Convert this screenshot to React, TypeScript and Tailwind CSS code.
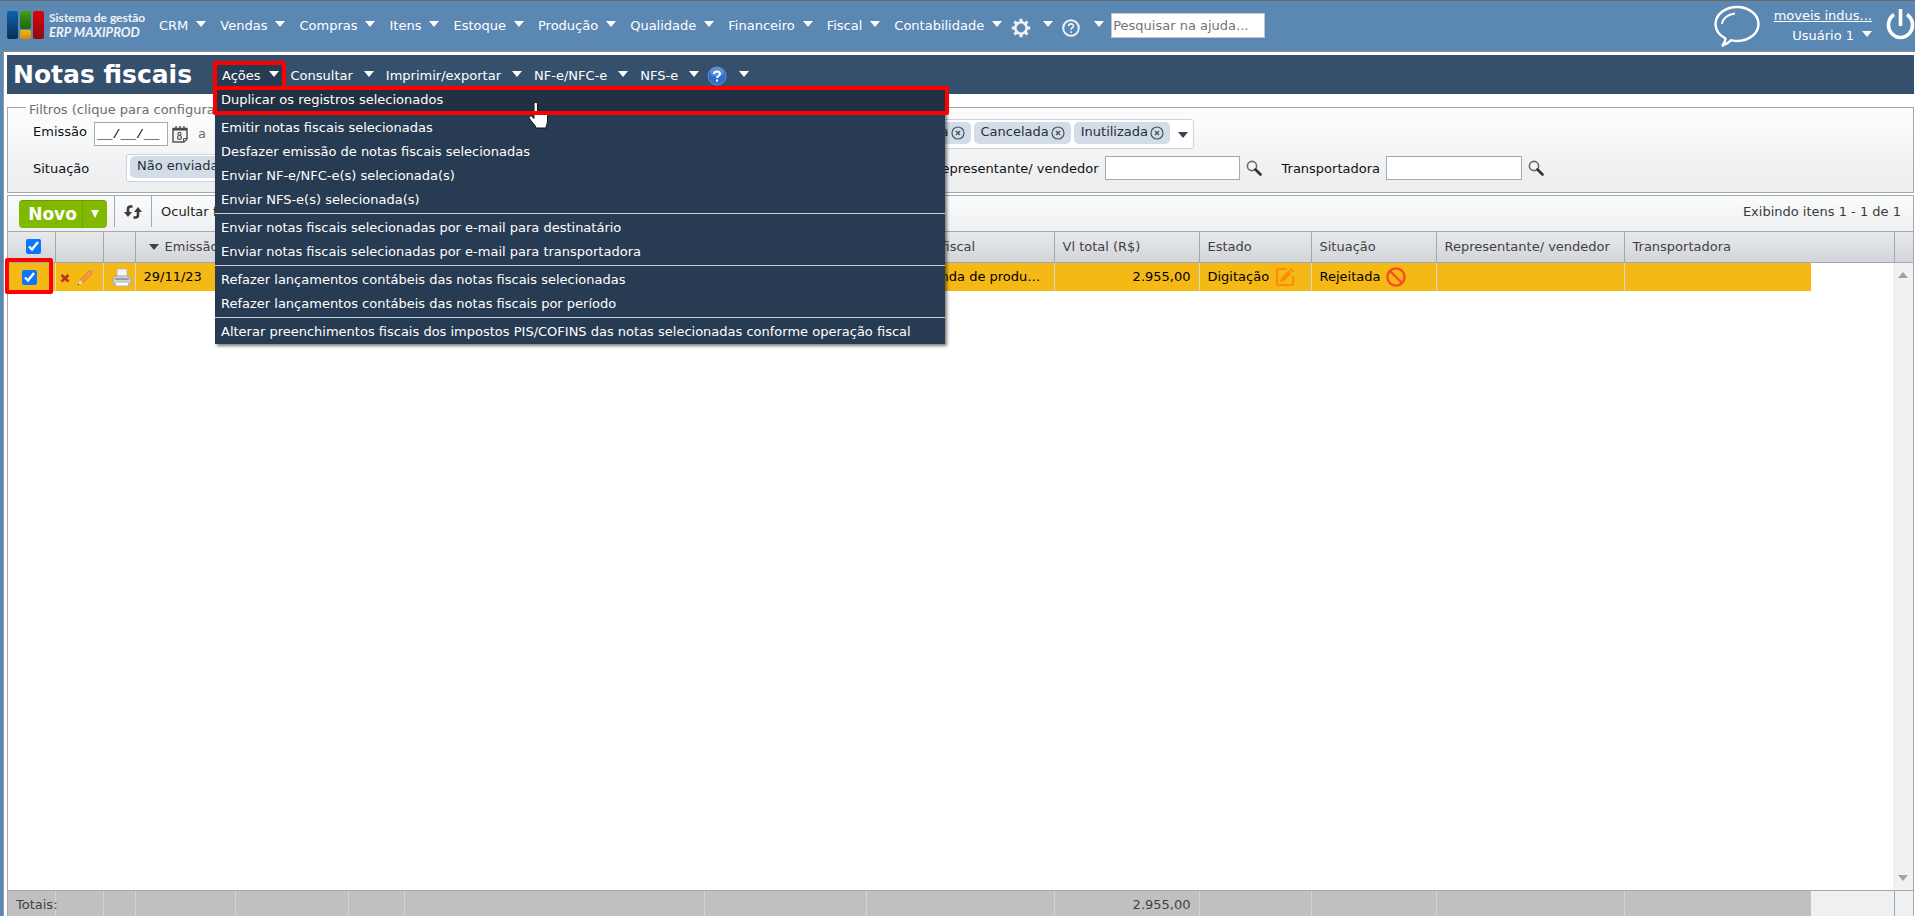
import React from 'react';

const TOP_MENU = ['CRM', 'Vendas', 'Compras', 'Itens', 'Estoque', 'Produção', 'Qualidade', 'Financeiro', 'Fiscal', 'Contabilidade'];

const ACTIONS = [
  ['Duplicar os registros selecionados'],
  [
    'Emitir notas fiscais selecionadas',
    'Desfazer emissão de notas fiscais selecionadas',
    'Enviar NF-e/NFC-e(s) selecionada(s)',
    'Enviar NFS-e(s) selecionada(s)',
  ],
  [
    'Enviar notas fiscais selecionadas por e-mail para destinatário',
    'Enviar notas fiscais selecionadas por e-mail para transportadora',
  ],
  [
    'Refazer lançamentos contábeis das notas fiscais selecionadas',
    'Refazer lançamentos contábeis das notas fiscais por período',
  ],
  ['Alterar preenchimentos fiscais dos impostos PIS/COFINS das notas selecionadas conforme operação fiscal'],
];

function Caret({ className = '' }: { className?: string }) {
  return (
    <svg className={`shrink-0 ${className}`} width="10" height="6" viewBox="0 0 10 6" fill="currentColor" aria-hidden="true">
      <path d="M0 0h10L5 6z" />
    </svg>
  );
}

function Logo() {
  return (
    <svg width="37" height="28" viewBox="0 0 37 28" className="shrink-0" aria-hidden="true">
      <defs>
        <linearGradient id="lb" x1="0" y1="0" x2="0" y2="1"><stop offset="0" stopColor="#0a63a8" /><stop offset="1" stopColor="#0a2f5c" /></linearGradient>
        <linearGradient id="lg" x1="0" y1="0" x2="0" y2="1"><stop offset="0" stopColor="#3fa01a" /><stop offset="1" stopColor="#1f6410" /></linearGradient>
        <linearGradient id="lr" x1="0" y1="0" x2="0" y2="1"><stop offset="0" stopColor="#dd0408" /><stop offset="1" stopColor="#8f0a10" /></linearGradient>
        <linearGradient id="ly" x1="0" y1="0" x2="0" y2="1"><stop offset="0" stopColor="#f5b512" /><stop offset="1" stopColor="#cf8d0a" /></linearGradient>
      </defs>
      <rect x="0" y="0" width="11" height="28" rx="2" fill="url(#lb)" />
      <rect x="13" y="0" width="11" height="18" rx="2" fill="url(#lg)" />
      <rect x="13" y="19" width="11" height="9" rx="2" fill="url(#ly)" />
      <rect x="26" y="0" width="11" height="28" rx="2" fill="url(#lr)" />
    </svg>
  );
}

function SearchIcon() {
  return (
    <svg width="16" height="16" viewBox="0 0 16 16" aria-hidden="true">
      <circle cx="6" cy="6" r="4.6" fill="#f6f7f8" stroke="#6b6b6b" strokeWidth="1.6" />
      <path d="M9.5 9.5l5 5" stroke="#333" strokeWidth="2.6" strokeLinecap="round" />
    </svg>
  );
}

function CalendarIcon() {
  return (
    <svg width="16" height="17" viewBox="0 0 16 17" aria-hidden="true" fill="none">
      <path d="M1 2.5h14V13l-3 3H1z" fill="#f4f5f6" stroke="#555" strokeWidth="1.5" />
      <path d="M1 3.5h14" stroke="#444" strokeWidth="2" />
      <path d="M4 0v2M8 0v2M12 0v2" stroke="#555" strokeWidth="1.4" />
      <path d="M11.5 16v-3.5h3.5" stroke="#555" />
      <circle cx="7.5" cy="7.9" r="1.5" stroke="#555" strokeWidth="1.2" />
      <circle cx="7.5" cy="11.4" r="1.9" stroke="#555" strokeWidth="1.2" />
    </svg>
  );
}

function CloseCircle() {
  return (
    <svg width="14" height="14" viewBox="0 0 14 14" fill="none" stroke="#4d545c" aria-hidden="true">
      <circle cx="7" cy="7" r="6" strokeWidth="1.2" />
      <path d="M5 5l4 4M9 5l-4 4" strokeWidth="1.4" />
    </svg>
  );
}

function Tag({ children }: { children: string }) {
  return (
    <li className="flex h-[22px] items-center gap-[2px] rounded-[5px] bg-[#d2dde9] pr-[6px] pl-[7px] whitespace-nowrap text-[#2b2f33]">
      <span className="pb-[2px] leading-[18px]">{children}</span>
      <button type="button" aria-label={`Remover ${children}`}><CloseCircle /></button>
    </li>
  );
}

const field = 'h-6 border border-[#a9a9a9] bg-white px-[2px] text-black outline-none';
const dateField = `${field} w-[74px] font-['Liberation_Mono',monospace]`;
const topButton = 'flex items-center gap-2 pr-[14px] whitespace-nowrap last-of-type:pr-[9px]';

function Header() {
  return (
    <header className="flex h-[52px] shrink-0 border-t border-b border-t-[#6a6a6a] border-b-[#7f8b95] bg-[#5b87b3] pl-[7px] text-white">
      <a href="#inicio" className="flex h-[48px] w-[152px] shrink-0 items-center gap-[5px]">
        <Logo />
        <span className="flex flex-col font-['Lato',sans-serif] font-bold whitespace-nowrap text-white/90">
          <span className="text-[12px] leading-[15px]">Sistema de gestão</span>
          <span className="text-[13px] leading-[15px] italic">ERP MAXIPROD</span>
        </span>
      </a>
      <nav className="flex h-[49px] items-center">
        <div className="flex items-center">
          {TOP_MENU.map((item) => (
            <button key={item} type="button" className={topButton}>
              {item}
              <Caret className="mb-1" />
            </button>
          ))}
        </div>
        <button type="button" aria-label="Configurações" className="flex items-center gap-3 pr-[9px]">
          <svg width="20" height="20" viewBox="0 0 20 20" fill="none" stroke="#f2f2f2" className="mt-1" aria-hidden="true">
            <circle cx="10" cy="10" r="5.7" strokeWidth="2.6" />
            <path d="M10 .8v3M10 16.200v3M.8 10h3M16.200 10h3M3.500 3.500l2.200 2.200M14.300 14.300l2.200 2.200M3.500 16.500l2.200-2.200M14.300 5.700l2.200-2.200" strokeWidth="3" />
          </svg>
          <Caret className="mb-1" />
        </button>
        <button type="button" aria-label="Ajuda" className="flex items-center gap-[14px] pr-[7px]">
          <svg width="18" height="18" viewBox="0 0 18 18" fill="none" stroke="#eef1f4" className="mt-1" aria-hidden="true">
            <circle cx="9" cy="9" r="7.8" strokeWidth="2" />
            <path d="M6.600 7.200c0-3 4.900-3 4.900-.3 0 1.700-2.400 1.900-2.400 3.900M9.100 12.300v1.700" strokeWidth="1.6" />
          </svg>
          <Caret className="mb-1" />
        </button>
        <input aria-label="Pesquisar na ajuda" placeholder="Pesquisar na ajuda..." className="h-[25px] w-[154px] border border-[#c6c6c6] bg-white px-[1px] text-black outline-none placeholder:text-[#757575]" />
      </nav>
      <div className="ml-auto flex h-[49px] items-center">
        <button type="button" aria-label="Chat" className="mr-[14px]">
          <svg width="46" height="42" viewBox="0 0 46 42" fill="none" stroke="#fff" strokeLinejoin="round" aria-hidden="true">
            <path d="M11.500 33.500C5 30 1.500 25 1.500 19 1.500 9.500 11 2 23 2s21.500 7.500 21.500 17S35 36 23 36c-2.500 0-4-.4-6-.8-2 2.300-4.500 4-8.500 5.300 2-2.500 3-4.500 3-7z" strokeWidth="2.4" />
            <path d="M8 19c.5-5 5-9.500 13-10.500" strokeWidth="1.8" />
          </svg>
        </button>
        <div className="flex flex-col items-end leading-[20px] whitespace-nowrap">
          <a href="#empresa" className="underline">moveis indus...</a>
          <button type="button" className="flex items-center gap-2">Usuário 1<Caret className="mb-1" /></button>
        </div>
        <button type="button" aria-label="Sair" className="mb-[2px] ml-[14px]">
          <svg width="29" height="36" viewBox="0 0 29 36" fill="none" stroke="#fff" strokeWidth="3.6" aria-hidden="true">
            <path d="M8 7.500a12 12.500 0 1 0 13 0M14.500 2v17" />
          </svg>
        </button>
      </div>
    </header>
  );
}

function ActionsMenu() {
  return (
    <div className="absolute top-[31px] left-0 z-20 w-[730px] bg-[#273c53] text-white shadow-[2px_2px_3px_rgba(0,0,0,0.5)]">
      {ACTIONS.map((group, g) => (
        <ul key={g} className={g === 0 ? '' : 'mt-[1px] border-t border-[#c3ccd4] pt-[2px]'}>
          {group.map((a, i) => (
            <li key={a}>
              <button type="button" className={`block h-6 w-full px-[6px] text-left whitespace-nowrap ${g === 0 && i === 0 ? 'bg-[#213143]' : ''}`}>{a}</button>
            </li>
          ))}
        </ul>
      ))}
      <svg className="pointer-events-none absolute top-[13px] left-[312px]" width="22" height="29" viewBox="0 0 22 29" aria-hidden="true">
        <path d="M7 3c0-2 3.500-2 3.500 0v6.500l8 1.800c1.500.4 2 1.500 2 3V20c0 3-1.500 4.500-1.500 7H9c-.5-3-4.500-6-6.500-9.500C1.500 15.500 4 14 5.500 16L7 17.500z" fill="#fff" stroke="#111" strokeWidth="1" />
        <path d="M10.500 9v4M14 10v3.500M17 11v3" stroke="#222" strokeWidth="1" />
      </svg>
      <span className="pointer-events-none absolute -top-[2px] -left-[2px] h-[29px] w-[736px] rounded-[2px] border-4 border-[#fe0000]" />
    </div>
  );
}

function TitleBar() {
  return (
    <div className="flex h-[39px] shrink-0 items-center bg-[#34506d] pl-[6px] text-white">
      <h1 className="w-[202px] shrink-0 text-[25px] leading-[36px] font-bold whitespace-nowrap">Notas fiscais</h1>
      <nav className="flex h-full items-center pt-[2px]">
        <div className="relative flex h-full items-center pr-3">
          <button type="button" aria-expanded="true" className="flex h-[25px] items-center gap-2 bg-[#273c53] pr-1 pl-[7px] whitespace-nowrap">Ações<Caret className="mb-1" /></button>
          <ActionsMenu />
          <span className="pointer-events-none absolute top-[4px] -left-[2px] z-30 h-[29px] w-[73px] rounded-[2px] border-4 border-[#fe0000]" />
        </div>
        <div className="-ml-1 flex items-center">
          {['Consultar', 'Imprimir/exportar', 'NF-e/NFC-e', 'NFS-e'].map((item) => (
            <button key={item} type="button" className="flex items-center gap-[11px] pr-3 whitespace-nowrap last-of-type:pr-2">{item}<Caret className="mb-1" /></button>
          ))}
        </div>
        <button type="button" aria-label="Ajuda da tela" className="flex items-center gap-3">
          <svg width="20" height="20" viewBox="0 0 20 20" aria-hidden="true">
            <circle cx="10" cy="10" r="9" fill="#2f6fc6" stroke="#5b93d8" />
            <ellipse cx="10" cy="6" rx="7" ry="4.5" fill="#78a9e3" opacity=".6" />
            <path d="M7 8c0-3.500 6-3.500 6 0 0 2-3 2-3 4M10 13.500v2" fill="none" stroke="#fff" strokeWidth="2" />
          </svg>
          <Caret className="mb-1" />
        </button>
      </nav>
    </div>
  );
}

function Filters() {
  return (
    <fieldset className="mt-[5px] h-[94px] min-w-0 shrink-0 border border-[#a3a8ae] bg-linear-to-b from-[#fafbfb] from-20% to-[#eeeff1] to-80% px-[18px]">
      <legend className="h-4 px-[3px] pt-[3px] leading-4 text-[#6e6e6e]">Filtros (clique para configurar)</legend>
      <div className="mt-[2px] flex h-[34px] items-center pl-[7px]">
        <label htmlFor="emissao-de" className="mb-[5px] w-[61px]">Emissão</label>
        <input id="emissao-de" defaultValue="__/__/__" className={dateField} />
        <button type="button" aria-label="Abrir calendário" className="ml-1"><CalendarIcon /></button>
        <label htmlFor="emissao-ate" className="mx-[10px] text-[#6e6e6e]">a</label>
        <input id="emissao-ate" defaultValue="__/__/__" className={dateField} />
        <ul className="ml-auto flex h-[30px] items-center gap-[3px] rounded-[3px] border border-[#cdd2dc] bg-white pb-[2px] pl-1">
          <Tag>Emitida</Tag>
          <Tag>Cancelada</Tag>
          <Tag>Inutilizada</Tag>
          <li className="flex px-[5px] pt-1 text-[#3c4248]"><button type="button" aria-label="Mais estados"><Caret /></button></li>
        </ul>
        <span className="w-[701px]" />
      </div>
      <div className="flex h-[34px] items-center pl-[7px]">
        <span className="w-[93px] pt-[2px]">Situação</span>
        <ul className="flex h-[28px] items-center gap-[3px] rounded-[3px] border border-[#cdd2dc] bg-white px-[3px] pb-[3px]">
          <Tag>Não enviada</Tag>
        </ul>
        <label htmlFor="vendedor" className="ml-auto pt-[2px] whitespace-nowrap">Representante/ vendedor</label>
        <input id="vendedor" className={`${field} ml-[6px] w-[135px]`} />
        <button type="button" aria-label="Buscar vendedor" className="ml-[6px]"><SearchIcon /></button>
        <label htmlFor="transportadora" className="ml-5 pt-[2px]">Transportadora</label>
        <input id="transportadora" className={`${field} ml-[6px] w-[136px]`} />
        <button type="button" aria-label="Buscar transportadora" className="ml-[6px]"><SearchIcon /></button>
        <span className="w-[351px]" />
      </div>
    </fieldset>
  );
}

function Cols() {
  return (
    <colgroup>
      <col className="w-[47px]" />
      <col className="w-[48px]" />
      <col className="w-[32px]" />
      <col className="w-[100px]" />
      <col className="w-[113px]" />
      <col className="w-[56px]" />
      <col className="w-[300px]" />
      <col className="w-[162px]" />
      <col className="w-[188px]" />
      <col className="w-[145px]" />
      <col className="w-[112px]" />
      <col className="w-[125px]" />
      <col className="w-[188px]" />
      <col className="w-[187px]" />
      <col />
    </colgroup>
  );
}

const th = 'border-r border-[#a3a8b3] px-2 text-left font-normal whitespace-nowrap overflow-hidden';
const tdBase = 'border-r border-[#d9d9d9] bg-[#f5b915] whitespace-nowrap';
const td = `${tdBase} px-2 overflow-hidden text-ellipsis`;
const tf = 'border-r border-[#d2d5d8] bg-[#c0c0c0] px-2';

function Grid() {
  return (
    <section className="mt-[2px] flex min-h-0 grow flex-col border-x border-t border-[#a3a8b3]">
      <div className="flex h-[35px] shrink-0 items-center bg-linear-to-b from-[#fafbfb] to-[#eff0f2] pl-[11px]">
        <div className="flex h-7 overflow-hidden rounded-[4px] border-t border-[#6f9a0a] bg-[#80b900] text-white">
          <button type="button" className="w-[63px] pl-1 text-[17px] font-bold">Novo</button>
          <button type="button" aria-label="Mais opções de novo" className="flex w-[25px] items-center justify-center border-l border-[#72a500]">
            <svg width="8" height="8" viewBox="0 0 8 8" fill="#fff" aria-hidden="true"><path d="M0 0h8L4 8z" /></svg>
          </button>
        </div>
        <button type="button" aria-label="Atualizar" className="ml-[7px] flex h-[31px] w-[38px] items-center justify-center self-start border-x border-[#a3a8b3]">
          <svg width="18" height="14" viewBox="0 0 18 14" fill="none" stroke="#3a3a3a" strokeWidth="2.6" aria-hidden="true">
            <path d="M8.500 1.500H6.500a2.500 2.500 0 0 0-2.500 2.500v5M9.500 12.500h2a2.500 2.500 0 0 0 2.500-2.500V5" />
            <path d="M0 7h8L4 12zM10 7h8l-4-5z" fill="#3a3a3a" stroke="none" />
          </svg>
        </button>
        <button type="button" className="mb-1 ml-[9px] whitespace-nowrap text-[#1e1e1e]">Ocultar filtros</button>
        <p className="mr-3 mb-1 ml-auto text-[#3a3a3a]">Exibindo itens 1 - 1 de 1</p>
      </div>

      <div className="flex min-h-0 grow flex-col">
        <div className="flex h-8 shrink-0 border-y border-[#a3a8b3] bg-linear-to-b from-[#e8e9eb] to-[#d2d5d9]">
          <table className="w-full table-fixed border-collapse text-[#3f4247]">
            <Cols />
            <thead>
              <tr className="h-[30px]">
                <th className={th}><input type="checkbox" defaultChecked aria-label="Selecionar todos" className="mb-[2px] ml-[10px] block size-[15px] accent-[#0a75ff]" /></th>
                <th className={th} />
                <th className={th} />
                <th className={th}><span className="ml-[5px] flex items-center gap-[6px]"><Caret />Emissão</span></th>
                <th className={th} />
                <th className={th} />
                <th className={th} />
                <th className={th} />
                <th className={th}>Operação fiscal</th>
                <th className={th}>Vl total (R$)</th>
                <th className={th}>Estado</th>
                <th className={th}>Situação</th>
                <th className={th}>Representante/ vendedor</th>
                <th className="px-2 text-left font-normal">Transportadora</th>
                <th />
              </tr>
            </thead>
          </table>
          <span className="w-[19px] shrink-0 border-l border-[#a3a8b3]" />
        </div>

        <div className="flex min-h-0 grow">
          <div className="grow">
            <table className="w-full table-fixed border-collapse text-black">
              <Cols />
              <tbody>
                <tr className="h-7">
                  <td className={`${tdBase} relative px-2`}>
                    <input type="checkbox" defaultChecked aria-label="Selecionar nota" className="ml-[6px] block size-[15px] accent-[#0a75ff]" />
                    <span className="pointer-events-none absolute -top-[5px] -left-[3px] z-10 h-9 w-12 rounded-[2px] border-4 border-[#fe0000]" />
                  </td>
                  <td className={td}>
                    <span className="-ml-1 flex items-center gap-[7px]">
                      <button type="button" aria-label="Excluir">
                        <svg width="10" height="10" viewBox="0 0 10 10" className="mt-[2px]" aria-hidden="true"><path d="M1.500 2l7 6.500M8.500 2l-7 6.500" stroke="#c0301c" strokeWidth="2.6" /></svg>
                      </button>
                      <button type="button" aria-label="Editar">
                        <svg width="17" height="17" viewBox="0 0 17 17" aria-hidden="true">
                          <path d="M3 11L12 2l3 3-9 9z" fill="#f59b3d" stroke="#d9772a" strokeWidth=".8" />
                          <path d="M12 2c1-2 5-1 4 1.500L15 5z" fill="#e98b7c" />
                          <path d="M3 11l3 3-5.500 2.500z" fill="#f3d7a8" /><path d="M.5 16.500l1-2 1 1z" fill="#444" />
                        </svg>
                      </button>
                    </span>
                  </td>
                  <td className={tdBase}>
                    <button type="button" aria-label="Imprimir" className="ml-2 block">
                      <svg width="20" height="19" viewBox="0 0 20 19" aria-hidden="true">
                        <path d="M5 1h10v8H5z" fill="#f3f3f3" stroke="#b5b5b5" strokeWidth=".8" />
                        <path d="M3 8h14l2 3v5H1v-5z" fill="#d4d4d6" stroke="#9d9da0" strokeWidth=".8" />
                        <path d="M3 10h14v2H3z" fill="#9b9ca0" /><path d="M4 14h12l1 4H3z" fill="#fafafa" stroke="#aaa" strokeWidth=".8" />
                      </svg>
                    </button>
                  </td>
                  <td className={td}>29/11/23</td>
                  <td className={td} />
                  <td className={td} />
                  <td className={td} />
                  <td className={td} />
                  <td className={td}>5.101 - Venda de produção</td>
                  <td className={`${td} text-right`}>2.955,00</td>
                  <td className={td}>
                    <span className="flex items-center gap-[6px]">Digitação
                      <svg width="20" height="20" viewBox="0 0 20 20" fill="none" stroke="#ff8a0c" aria-hidden="true">
                        <path d="M12 2H3.500A1.500 1.500 0 0 0 2 3.500v13A1.500 1.500 0 0 0 3.500 18h13a1.500 1.500 0 0 0 1.500-1.500V9" strokeWidth="2.2" />
                        <path d="M5 15l1-4 7.500-7.500 3 3L9 14zM14.500 2.500l1.500-1.500 3 3-1.500 1.500z" fill="#ff8a0c" stroke="none" />
                      </svg>
                    </span>
                  </td>
                  <td className={td}>
                    <span className="flex items-center gap-[6px]">Rejeitada
                      <svg width="20" height="20" viewBox="0 0 20 20" fill="none" stroke="#fb4a25" strokeWidth="2.4" aria-hidden="true">
                        <circle cx="10" cy="10" r="8.6" /><path d="M4 4l12 12" />
                      </svg>
                    </span>
                  </td>
                  <td className={td} />
                  <td className="bg-[#f5b915]" />
                  <td />
                </tr>
              </tbody>
            </table>
          </div>
          <div className="flex w-5 shrink-0 flex-col items-center justify-between bg-[#f1f1f1] py-[9px] text-[#a3a3a3]">
            <Caret className="rotate-180" />
            <Caret />
          </div>
        </div>

        <div className="flex h-[26px] shrink-0 border-t border-[#a3a8b3] bg-[#eff0f2]">
          <table className="w-full table-fixed border-collapse text-[#3f4247]">
            <Cols />
            <tfoot>
              <tr className="h-[25px]">
                <td className={`${tf} pt-[2px] whitespace-nowrap`}>Totais:</td>
                <td className={tf} /><td className={tf} /><td className={tf} /><td className={tf} /><td className={tf} />
                <td className={tf} /><td className={tf} /><td className={tf} />
                <td className={`${tf} pt-[2px] text-right`}>2.955,00</td>
                <td className={tf} /><td className={tf} /><td className={tf} />
                <td className="bg-[#c0c0c0]" />
                <td />
              </tr>
            </tfoot>
          </table>
          <span className="w-[19px] shrink-0 border-l border-[#a3a8b3]" />
        </div>
      </div>
    </section>
  );
}

export default function App() {
  return (
    <div className="flex h-screen flex-col overflow-hidden bg-white font-['Verdana','DejaVu_Sans',sans-serif] text-[13px] leading-[18px] text-[#111]">
      <Header />
      <main className="flex min-h-0 grow border-l-[3px] border-[#5b87b3]">
        <div className="flex min-w-0 grow flex-col border-l border-[#8f9aa3] pt-[3px] pr-[1px] pl-[3px]">
          <TitleBar />
          <Filters />
          <Grid />
        </div>
      </main>
    </div>
  );
}
